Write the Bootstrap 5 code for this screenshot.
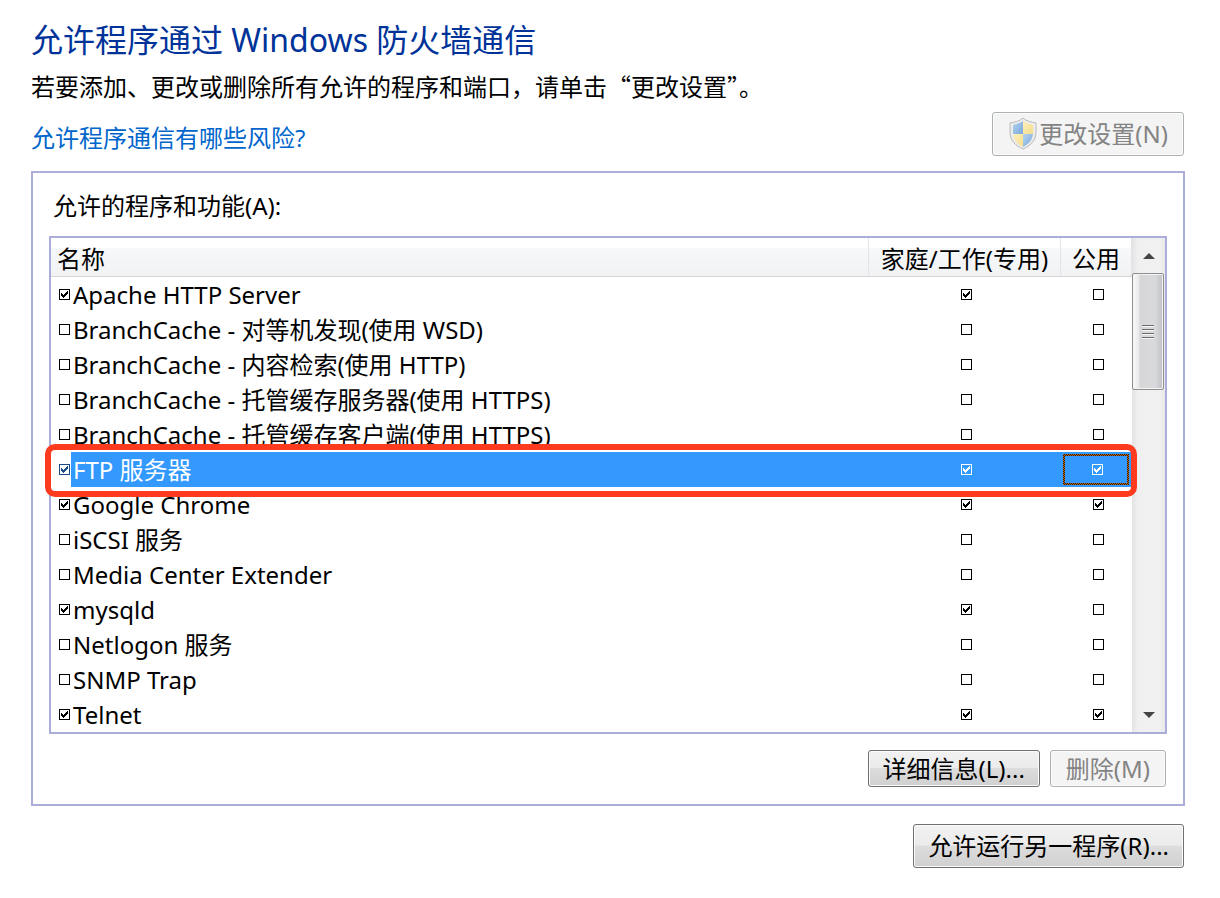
<!DOCTYPE html>
<html lang="zh-CN">
<head>
<meta charset="utf-8">
<meta name="viewport" content="width=device-width, initial-scale=1">
<title>允许程序通过 Windows 防火墙通信</title>
<link rel="stylesheet" href="https://cdn.jsdelivr.net/npm/bootstrap@5.3.0/dist/css/bootstrap.min.css">
<style>
  body { font-family: "Noto Sans", "Noto Sans CJK SC", sans-serif; font-size: 24px; line-height: 36px; color: #000; background: #fff; }
  .page { padding: 16px 35px 32px 31px; }
  .page-title { font-size: 32px; line-height: 48px; color: #003399; font-weight: 400; }
  .intro { font-family: "Noto Sans CJK SC", sans-serif; line-height: 44px; }
  .risk-link { color: #0066cc; font-family: "Open Sans", "Noto Sans CJK SC", sans-serif; }
  .frame { border: 2px solid #abadda; padding: 12px 16px 17px; margin-top: 15px; }
  .list-label { margin: 2px 0 11px 4px; font-size: 24px; font-weight: 400; line-height: 38px; }
  .list-box { border: 2px solid #abadda; }

  .win-btn { --bs-btn-font-size: 24px; --bs-btn-line-height: 36px; --bs-btn-padding-x: 14px; --bs-btn-padding-y: 0; --bs-btn-border-radius: 3px;
    color: #000; border-color: #707070; background: linear-gradient(#f2f2f2, #ebebeb 48%, #dddddd 50%, #cfcfcf) border-box; box-shadow: inset 0 0 0 1px #fbfbfb; white-space: nowrap; }
  .win-btn:disabled { --bs-btn-padding-x: 15px; color: #838383; border-color: #adb2b5; background: #f4f4f4; opacity: 1; }
  .btn-tall { height: 44px; }
  .btn-short { height: 37px; --bs-btn-line-height: 35px; }
  .btn-row { gap: 10px; padding-right: 1px; }
  .footer-row { margin-top: 18px; padding-right: 1px; }
  .top-row { padding: 4px 1px 0 0; }

  .prog-table { table-layout: fixed; width: 100%; border-collapse: separate; border-spacing: 0; }
  .prog-table th { height: 39px; padding: 4px 0 0; font-weight: 400; line-height: 34px; text-align: center; white-space: nowrap;
    border-bottom: 1px solid #d5d5d5; border-right: 1px solid #e2e4e8; background: linear-gradient(#fff 10px, #f7f8fa 10px, #f1f2f4); }
  .prog-table th:first-child { text-align: left; padding-left: 6px; }
  .prog-table td { height: 35px; padding: 0; line-height: 35px; text-align: center; }
  .prog-table td.name-cell { padding-left: 8px; }
  .col-home { width: 192px; }
  .col-public { width: 71px; }
  .prog-name { text-align: left; padding-left: 2px; margin-left: 1px; height: 35px; white-space: nowrap; }
  .tick-slot { display: flex; align-items: center; justify-content: center; padding-left: 3px; }
  .tick { appearance: none; width: 11px; height: 11px; margin: 0; border: 1px solid #000; background: #fff; flex: none; display: block; }
  .tick:checked { background: #fff url("data:image/svg+xml,%3Csvg xmlns='http://www.w3.org/2000/svg' width='9' height='9' shape-rendering='crispEdges'%3E%3Cpath d='M1 3h1v1h1v1h1v-1h1v-1h1v-1h1v-1h1v3h-1v1h-1v1h-1v1h-1v1h-1v-1h-1v-1h-1z'/%3E%3C/svg%3E"); }

  .picked { position: relative; }
  .picked td:not(:first-child), .picked .prog-name { background: #3399ff; color: #fff; }
  .picked td:first-child .tick { border-color: #1c4b8c; background-image: url("data:image/svg+xml,%3Csvg xmlns='http://www.w3.org/2000/svg' width='9' height='9' shape-rendering='crispEdges'%3E%3Cpath fill='%231c4b8c' d='M1 3h1v1h1v1h1v-1h1v-1h1v-1h1v-1h1v3h-1v1h-1v1h-1v1h-1v1h-1v-1h-1v-1h-1z'/%3E%3C/svg%3E"); }
  .picked td:not(:first-child) .tick { border-color: #fff; background: #3399ff url("data:image/svg+xml,%3Csvg xmlns='http://www.w3.org/2000/svg' width='9' height='9' shape-rendering='crispEdges'%3E%3Cpath fill='%23fff' d='M1 3h1v1h1v1h1v-1h1v-1h1v-1h1v-1h1v3h-1v1h-1v1h-1v1h-1v1h-1v-1h-1v-1h-1z'/%3E%3C/svg%3E"); }
  .focus-box { height: 31px; margin: 0 3px 0 2px; padding: 2px; background: repeating-conic-gradient(#1c1c1c 0 25%, #cc6600 0 50%) 0 0 / 2px 2px; }
  .focus-box > span { background: #3399ff; }
  .callout { position: absolute; inset: -8px -5px -10px -6px; border: 6px solid #ff3b1f; border-radius: 10px; pointer-events: none; z-index: 2; }

  .scroller { width: 33px; flex: none; background: linear-gradient(90deg, #e3e3e3, #f0f0f0 6px, #f0f0f0 28px, #e8e8e8); }
  .scroll-arrow { border: 0; background: none; height: 35px; padding: 0; line-height: 0; }
  .thumb { height: 117px; width: 32px; border: 1px solid #8f8f8f; border-radius: 2px; background: linear-gradient(90deg, #fafafa, #e9e9eb 6px, #d6d6d9 7px, #d9dadc 22px, #bfc0c4); box-shadow: inset 0 0 0 1px #f4f4f4; }
</style>
</head>
<body>
<main class="page">
  <h1 class="page-title m-0">允许程序通过 Windows 防火墙通信</h1>
  <p class="intro m-0">若要添加、更改或删除所有允许的程序和端口，请单击“更改设置”。</p>
  <div class="top-row d-flex justify-content-between align-items-end">
    <a class="risk-link text-decoration-none" href="#">允许程序通信有哪些风险?</a>
    <button class="btn win-btn btn-tall d-flex align-items-center" type="button" disabled>
      <svg width="31" height="34" viewBox="0 0 31 34" aria-hidden="true">
        <defs>
          <linearGradient id="shieldBlue" x2="1" y2="1"><stop stop-color="#b7d3ee"/><stop offset="1" stop-color="#78a8dc"/></linearGradient>
          <linearGradient id="shieldGold" x2="1" y2="1"><stop stop-color="#fdf0bd"/><stop offset="1" stop-color="#f6dc8c"/></linearGradient>
        </defs>
        <path d="M15 1C12 4 7 5 2 6V15C2 24 8 29 15 32C22 29 28 24 28 15V6C23 5 18 4 15 1Z" fill="#ececec" stroke="#b9b9b9"/>
        <path d="M15 4C12 6 8 7 5 8V17H15Z" fill="url(#shieldBlue)"/><path d="M15 4C18 6 22 7 25 8V17H15Z" fill="url(#shieldGold)"/>
        <path d="M5 17H15V30C9 27 6 23 5 17Z" fill="url(#shieldGold)"/><path d="M25 17H15V30C21 27 24 23 25 17Z" fill="url(#shieldBlue)"/>
      </svg>更改设置(N)</button>
  </div>

  <section class="frame">
    <h2 class="list-label">允许的程序和功能(A):</h2>
    <div class="list-box d-flex">
      <div class="flex-grow-1">
        <table class="prog-table">
          <thead><tr><th scope="col">名称</th><th scope="col" class="col-home">家庭/工作(专用)</th><th scope="col" class="col-public">公用</th></tr></thead>
          <tbody id="programs"></tbody>
        </table>
      </div>
      <div class="scroller d-flex flex-column">
        <button class="scroll-arrow" type="button" aria-label="向上滚动"><svg width="12" height="6"><path d="M0 6L6 0L12 6Z" fill="#444"/></svg></button>
        <div class="thumb d-flex align-items-center justify-content-center"><svg width="12" height="15" shape-rendering="crispEdges"><path d="M0 1h12v1H0zM0 5h12v1H0zM0 9h12v1H0zM0 13h12v1H0z" fill="#6c6c6c"/><path d="M0 2h12v1H0zM0 6h12v1H0zM0 10h12v1H0zM0 14h12v1H0z" fill="#f6f6f6"/></svg></div>
        <button class="scroll-arrow mt-auto" type="button" aria-label="向下滚动"><svg width="12" height="6"><path d="M0 0L6 6L12 0Z" fill="#444"/></svg></button>
      </div>
    </div>
    <div class="btn-row d-flex justify-content-end mt-3">
      <button class="btn win-btn btn-short" type="button">详细信息(L)...</button>
      <button class="btn win-btn btn-short" type="button" disabled>删除(M)</button>
    </div>
  </section>
  <div class="footer-row d-flex justify-content-end">
    <button class="btn win-btn btn-tall" type="button">允许运行另一程序(R)...</button>
  </div>
</main>
<script src="https://cdn.jsdelivr.net/npm/bootstrap@5.3.0/dist/js/bootstrap.bundle.min.js"></script>
<script>
  const programs = [
    ['Apache HTTP Server', 1, 1, 0],
    ['BranchCache - 对等机发现(使用 WSD)', 0, 0, 0],
    ['BranchCache - 内容检索(使用 HTTP)', 0, 0, 0],
    ['BranchCache - 托管缓存服务器(使用 HTTPS)', 0, 0, 0],
    ['BranchCache - 托管缓存客户端(使用 HTTPS)', 0, 0, 0],
    ['FTP 服务器', 1, 1, 1],
    ['Google Chrome', 1, 1, 1],
    ['iSCSI 服务', 0, 0, 0],
    ['Media Center Extender', 0, 0, 0],
    ['mysqld', 1, 1, 0],
    ['Netlogon 服务', 0, 0, 0],
    ['SNMP Trap', 0, 0, 0],
    ['Telnet', 1, 1, 1]
  ];
  const picked = 5;
  const box = (on, attrs) => `<input class="tick" type="checkbox" ${attrs} ${on ? 'checked' : ''}>`;
  document.getElementById('programs').innerHTML = programs.map(([name, on, home, pub], i) => {
    const pubBox = box(pub, `aria-label="${name} 公用"`);
    return `<tr class="${i === picked ? 'picked' : ''}">
      <td class="name-cell"><div class="d-flex align-items-center">${box(on, `id="p${i}"`)}<label class="prog-name flex-grow-1" for="p${i}">${name}</label></div></td>
      <td><div class="tick-slot">${box(home, `aria-label="${name} 家庭/工作(专用)"`)}</div></td>
      <td>${i === picked
        ? `<div class="focus-box d-flex"><span class="tick-slot flex-grow-1">${pubBox}</span></div><div class="callout"></div>`
        : `<div class="tick-slot">${pubBox}</div>`}</td></tr>`;
  }).join('');
</script>
</body>
</html>
